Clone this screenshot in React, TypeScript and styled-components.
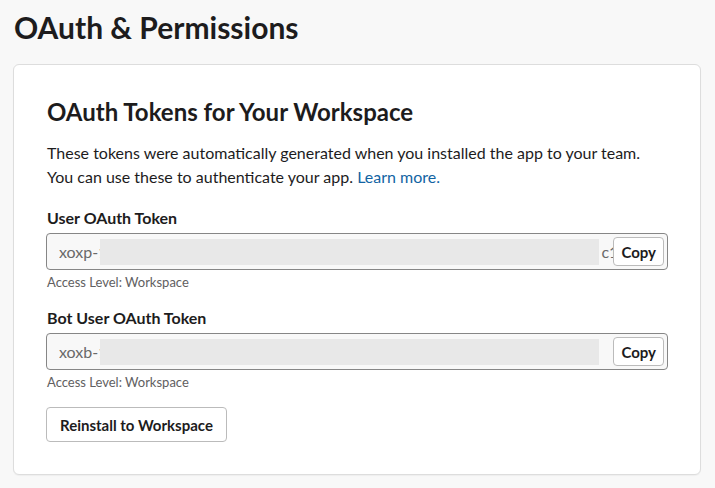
import styled, { createGlobalStyle } from 'styled-components';

const GlobalStyle = createGlobalStyle`
  html, body {
    margin: 0;
    padding: 0;
    background: #f8f8f8;
  }
  body {
    font-family: Lato, "Noto Sans", "Liberation Sans", sans-serif;
    color: #1d1c1d;
    -webkit-font-smoothing: antialiased;
  }
`;

const Page = styled.main`
  padding: 8px 14px 14px 13px;
`;

const PageTitle = styled.h1`
  margin: 0 0 18px 1px;
  font-size: 30px;
  line-height: 38px;
  font-weight: 700;
`;

const Card = styled.section`
  display: flex;
  flex-direction: column;
  align-items: flex-start;
  background: #fff;
  border: 1px solid #dddddd;
  border-radius: 6px;
  box-shadow: 0 1px 1px rgba(0, 0, 0, 0.04);
  padding: 32px;
`;

const CardTitle = styled.h2`
  margin: 0 0 14px 1px;
  font-size: 24px;
  line-height: 30px;
  font-weight: 700;
`;

const Paragraph = styled.p`
  margin: 0 0 18px 1px;
  font-size: 16px;
  line-height: 24px;
`;

const Link = styled.a`
  color: #1264a3;
  text-decoration: none;
`;

const Label = styled.div`
  margin: 0 0 4px 1px;
  font-size: 16px;
  line-height: 22px;
  font-weight: 700;
`;

const TokenField = styled.div`
  display: flex;
  align-items: center;
  height: 35px;
  padding: 0 3px 0 12px;
  background: #f8f8f8;
  border: 1px solid #868686;
  border-radius: 4px;
  overflow: hidden;
`;

const TokenText = styled.span`
  flex: none;
  font-size: 16px;
  color: #696969;
  white-space: nowrap;
  overflow: hidden;
`;

const Redacted = styled.span`
  flex: 1;
  height: 26px;
  margin-left: -7px;
  background: #e8e8e8;
`;

const Suffix = styled(TokenText)<{ $width: number }>`
  width: ${({ $width }) => $width}px;
  padding-left: 2px;
`;

const Button = styled.button<{ $small?: boolean }>`
  flex: none;
  font-family: inherit;
  font-weight: 700;
  color: #1d1c1d;
  background: #fff;
  border: 1px solid #bbbbbb;
  border-radius: 4px;
  cursor: pointer;
  font-size: 15px;
  height: ${({ $small }) => ($small ? '29px' : '35px')};
  padding: ${({ $small }) => ($small ? '0 7px' : '0 13px')};
`;

const Hint = styled.div`
  margin: 4px 0 0 1px;
  font-size: 13px;
  line-height: 16px;
  color: #616061;
`;

const TokenBlock = styled.div`
  align-self: stretch;
  margin-bottom: 17px;
`;

type Token = {
  label: string;
  prefix: string;
  suffix: string;
};

const tokens: Token[] = [
  { label: 'User OAuth Token', prefix: 'xoxp-1', suffix: 'c1' },
  { label: 'Bot User OAuth Token', prefix: 'xoxb-1', suffix: '' },
];

export default function App() {
  return (
    <>
      <GlobalStyle />
      <Page>
        <PageTitle>OAuth &amp; Permissions</PageTitle>
        <Card>
          <CardTitle>OAuth Tokens for Your Workspace</CardTitle>
          <Paragraph>
            These tokens were automatically generated when you installed the app to your team.
            <br />
            You can use these to authenticate your app. <Link href="#">Learn more.</Link>
          </Paragraph>
          {tokens.map((t) => (
            <TokenBlock key={t.label}>
              <Label>{t.label}</Label>
              <TokenField>
                <TokenText>{t.prefix}</TokenText>
                <Redacted />
                <Suffix $width={12}>{t.suffix}</Suffix>
                <Button $small>Copy</Button>
              </TokenField>
              <Hint>Access Level: Workspace</Hint>
            </TokenBlock>
          ))}
          <Button>Reinstall to Workspace</Button>
        </Card>
      </Page>
    </>
  );
}
